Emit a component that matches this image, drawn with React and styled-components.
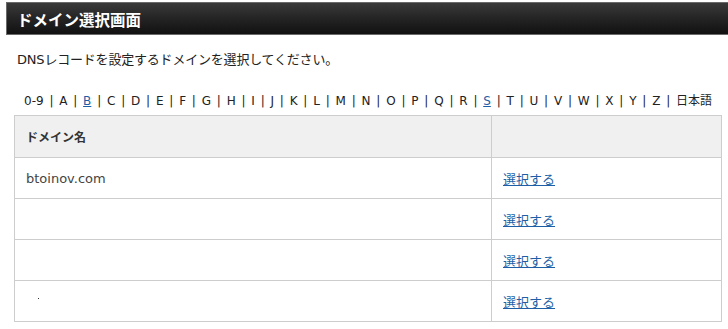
import React from 'react'
import styled, { createGlobalStyle } from 'styled-components'

const GlobalStyle = createGlobalStyle`
  html, body {
    margin: 0;
    padding: 0;
    background: #fff;
  }
  body {
    font-family: "DejaVu Sans", "Noto Sans CJK JP", sans-serif;
    color: #222;
    overflow: hidden;
  }
`

const letters = ['0-9', 'A', 'B', 'C', 'D', 'E', 'F', 'G', 'H', 'I', 'J', 'K', 'L', 'M', 'N', 'O', 'P', 'Q', 'R', 'S', 'T', 'U', 'V', 'W', 'X', 'Y', 'Z', '日本語']
const linked = ['B', 'S']

const domains = ['btoinov.com', '', '', '.']

function App() {
  return (
    <Page>
      <GlobalStyle />
      <TitleBar>
        <Title>ドメイン選択画面</Title>
      </TitleBar>
      <Lead>DNSレコードを設定するドメインを選択してください。</Lead>
      <AlphaRow>
        {letters.map((l, i) => (
          <React.Fragment key={l}>
            {i > 0 && <Sep>|</Sep>}
            {linked.includes(l) ? <AlphaLink href="#">{l}</AlphaLink> : <Alpha>{l}</Alpha>}
          </React.Fragment>
        ))}
      </AlphaRow>
      <Table>
        <thead>
          <tr>
            <Th>ドメイン名</Th>
            <Th $narrow></Th>
          </tr>
        </thead>
        <tbody>
          {domains.map((d, i) => (
            <tr key={i}>
              <Td>{d === '.' ? <Dot /> : d}</Td>
              <Td $narrow>
                <SelectLink href="#">選択する</SelectLink>
              </Td>
            </tr>
          ))}
        </tbody>
      </Table>
    </Page>
  )
}

const Page = styled.div`
  width: 728px;
  height: 329px;
  padding-top: 2px;
  box-sizing: border-box;
`

const TitleBar = styled.div`
  margin-left: 6px;
  height: 33px;
  box-sizing: border-box;
  border: 1px solid #6a6a6a;
  border-right: none;
  background: linear-gradient(to bottom, #3a3a3a 0%, #262626 45%, #111 100%);
  display: flex;
  align-items: center;
  padding-left: 10px;
`

const Title = styled.h1`
  margin: 0;
  color: #fff;
  font-size: 15.5px;
  font-weight: bold;
  font-family: "Noto Sans CJK JP", sans-serif;
`

const Lead = styled.p`
  margin: 17px 0 0 17px;
  font-size: 13px;
  line-height: 16px;
  color: #222;
  letter-spacing: -0.2px;
`

const AlphaRow = styled.div`
  margin: 26px 0 0 24px;
  display: flex;
  align-items: center;
  font-size: 12px;
  line-height: 14px;
  color: #222;
`

const Alpha = styled.span``

const AlphaLink = styled.a`
  color: #1d5fa6;
  text-decoration: underline;
`

const Sep = styled.span`
  margin: 0 5.8px;
`

const Table = styled.table`
  margin: 7px 0 0 14px;
  width: 708px;
  border-collapse: collapse;
  border: 1px solid #cdcdcd;
`

const Th = styled.th`
  height: 42px;
  box-sizing: border-box;
  background: #f0f0f0;
  border: 1px solid #cdcdcd;
  text-align: left;
  padding: 0 11px;
  font-size: 12px;
  font-weight: bold;
  color: #333;
  width: ${p => (p.$narrow ? '230px' : 'auto')};
`

const Td = styled.td`
  height: 41px;
  box-sizing: border-box;
  border: 1px solid #cdcdcd;
  padding: 0 11px;
  font-size: 13px;
  color: #444;
  vertical-align: middle;
  width: ${p => (p.$narrow ? '230px' : 'auto')};
`

const Dot = styled.span`
  display: inline-block;
  width: 1px;
  height: 1px;
  margin: 0 0 8px 12px;
  background: #333;
  vertical-align: middle;
`

const SelectLink = styled.a`
  color: #1d5fa6;
  text-decoration: underline;
  font-size: 13px;
`

export default App
